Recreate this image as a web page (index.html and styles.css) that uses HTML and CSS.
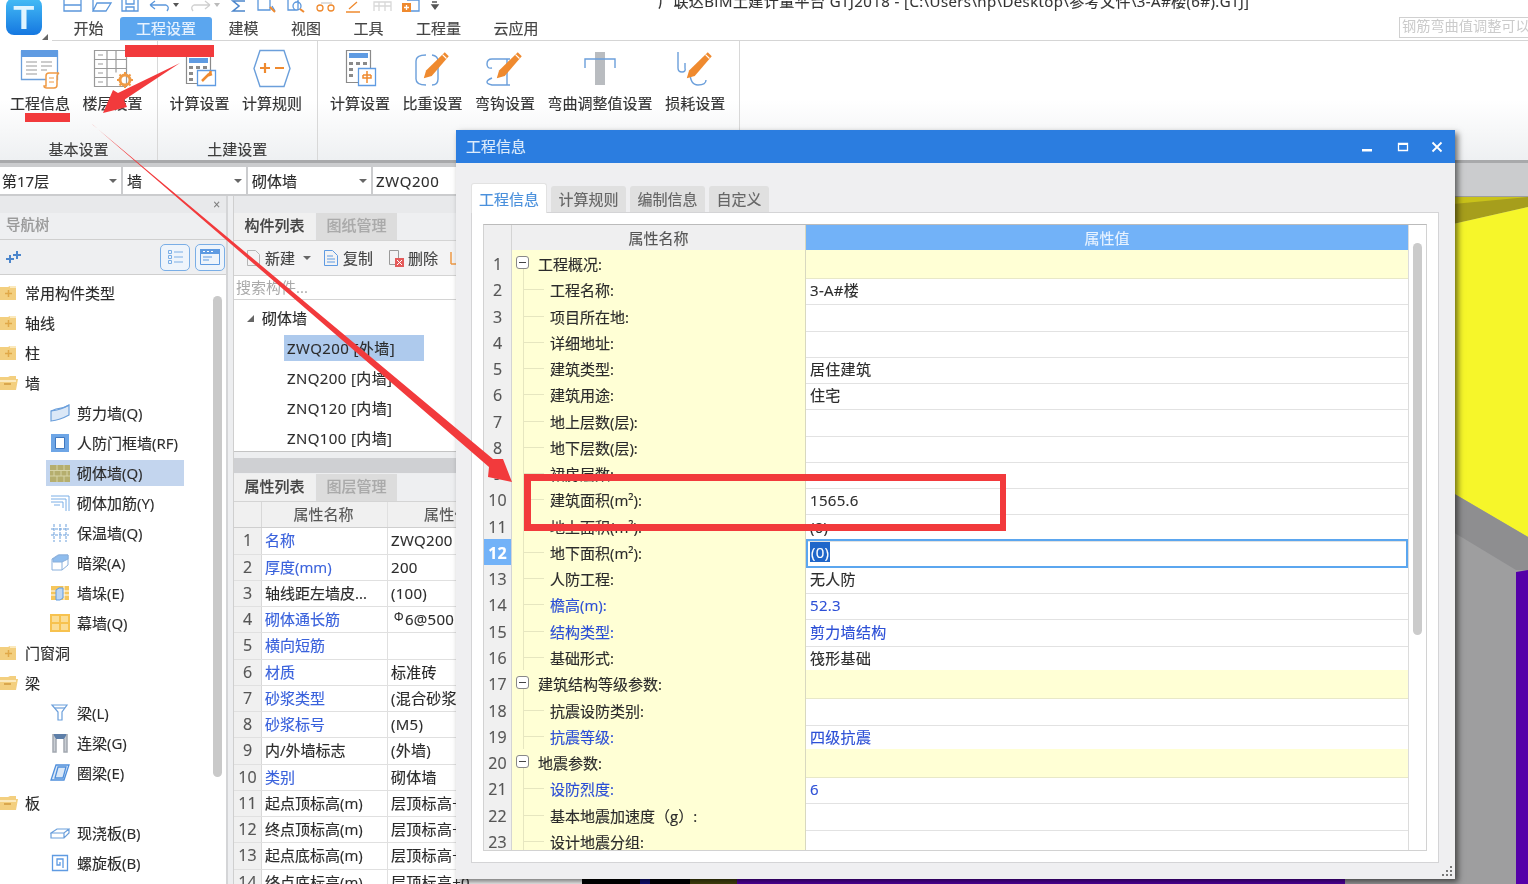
FILE: index.html
```html
<!DOCTYPE html>
<html lang="zh-CN">
<head>
<meta charset="utf-8">
<title>广联达BIM土建计量平台 GTJ2018</title>
<link rel="stylesheet" href="styles.css">
</head>
<body>
<svg class="defs" width="0" height="0">
  <symbol id="f-plus" viewBox="0 0 18 16"><path d="M-4 2h12l2-1h6v14H-4z" fill="#f3cf7f"/><path d="M10 1h6v2h-6z" fill="#fbe9bd"/><path d="M5 8.500h7M8.500 5v7" stroke="#e0a847" stroke-width="1.500"/></symbol>
  <symbol id="f-minus" viewBox="0 0 18 16"><path d="M-4 2h12l2-1h6v3h2l-2 11H-4z" fill="#f3cf7f"/><path d="M-4 5h20v2H-4z" fill="#fbe9bd"/><path d="M4 9h7" stroke="#d29a3c" stroke-width="1.500"/></symbol>
  <symbol id="pencil" viewBox="0 0 30 30"><path d="M24.500 2l3.500 3.500-15 17.500-7 2 2-7z" fill="#ef8a2f"/><path d="M22.500 4l3.500 3.500" stroke="#fff" stroke-width="1"/></symbol>
</svg>
<div class="app">
  <header class="head">
    <div class="logo-col"><div class="logo"><span class="logo-t">T</span></div><i class="logo-tri"></i></div>
    <div class="head-main">
      <div class="qat">
        <svg class="qat-icons" width="390" height="15" viewBox="0 0 390 15" fill="none" stroke-width="1.300">
          <path d="M2 0v11h17V0M2 5h17" stroke="#5b97dc"/>
          <path d="M31 11l4-8h14l-5 8zM31 11V0" stroke="#5b97dc"/>
          <path d="M60 0v11h16V0M64 0v4h8V0M64 11V7h8v4" stroke="#5b97dc"/>
          <g transform="translate(-3 0)"><path d="M91 5l5-4M91 5l5 4M91 5h16q4 2 1 6" stroke="#5b97dc"/></g>
          <path d="M111 3h6l-3 4z" fill="#555"/>
          <g transform="translate(2 0)"><path d="M146 5l-5-4M146 5l-5 4M146 5h-16q-4 2-1 6" stroke="#cfcfcf"/></g>
          <path d="M152 3h6l-3 4z" fill="#bbb"/>
          <path d="M183 1h-12l6 5-6 5h12" stroke="#4c86cc" stroke-width="1.600"/>
          <g transform="translate(-2 0)"><path d="M198 0v10h12V0M212 6l3 5" stroke="#5b97dc"/><path d="M210 7l5 5" stroke="#ef8a2f" stroke-width="2"/></g>
          <g transform="translate(-7 0)"><path d="M233 0v10h10V0M246 6a4 4 0 1 1-8 0 4 4 0 0 1 8 0" stroke="#5b97dc"/><path d="M245 9l4 3" stroke="#ef8a2f" stroke-width="2"/></g>
          <g transform="translate(-2 0)"><path d="M261 3h11" stroke="#ccc"/><circle cx="260" cy="8" r="3" stroke="#ef8a2f"/><circle cx="271" cy="8" r="3" stroke="#ef8a2f"/></g>
          <path d="M287 9l8-7M284 12h14" stroke="#ef8a2f"/>
          <path d="M312 11V2h17v9M317 2v9M323 2v9M312 6h17" stroke="#d8d8d8"/>
          <path d="M345 0h12v11h-12" stroke="#5b97dc"/><rect x="340" y="3" width="9" height="9" fill="#ef8a2f"/><path d="M342 7.500h5M344.500 5v5" stroke="#fff"/>
          <path d="M370 2h5M370 5h6l-3 4z" fill="#555" stroke="#555"/>
        </svg>
        <span class="app-title">广联达BIM土建计量平台 GTJ2018 - [C:\Users\hp\Desktop\参考文件\3-A#楼(6#).GTJ]</span>
      </div>
      <nav class="tabs">
        <span class="tab">开始</span>
        <span class="tab tab-on">工程设置</span>
        <span class="tab">建模</span>
        <span class="tab">视图</span>
        <span class="tab">工具</span>
        <span class="tab">工程量</span>
        <span class="tab">云应用</span>
        <span class="hint">钢筋弯曲值调整可以精确设置</span>
      </nav>
    </div>
  </header>

  <section class="ribbon">
    <div class="group group-first">
      <div class="items">
        <div class="item">
          <svg class="ric" viewBox="0 0 46 46" fill="none"><path d="M4.500 4.500h36v28h-36z" stroke="#6b9fdb" stroke-width="1.300"/><path d="M4 3h37v7H4z" fill="#5f9be2"/><path d="M9 15h11M9 19h11M9 23h11M9 27h11M24 15h11M24 19h11M24 23h6" stroke="#9a9a9a" stroke-width="1.200"/><path d="M30 41c-2 0-3-1-3-2h2V29q0-3 3-3h10q-2 1-2 3v9q0 3-3 3z" fill="#fff" stroke="#ef9a45" stroke-width="1.500"/><path d="M32 31h5M32 35h5" stroke="#ef9a45"/></svg>
          <span>工程信息</span>
        </div>
        <div class="item">
          <svg class="ric" viewBox="0 0 46 46" fill="none" stroke="#9a9a9a" stroke-width="1.200"><path d="M4.500 3.500h32v36h-32zM17 3.500v36M26 3.500v22M4.500 12.500h32M4.500 21.500h32M4.500 30.500H24M8 8h5M8 17h5M8 26h5M8 35h5"/><circle cx="35" cy="33" r="5" stroke="#ef9a45" stroke-width="3"/><path d="M35 25v3M35 38v3M27 33h3M40 33h3M29.500 27.500l2 2M38.500 36.500l2 2M29.500 38.500l2-2M38.500 29.500l2-2" stroke="#ef9a45" stroke-width="2"/></svg>
          <span>楼层设置</span>
        </div>
      </div>
      <div class="group-label">基本设置</div>
    </div>
    <div class="group">
      <div class="items">
        <div class="item">
          <svg class="ric" viewBox="0 0 46 46" fill="none"><path d="M9.500 8.500h24v28h-24z" stroke="#8a8a8a" stroke-width="1.200"/><path d="M12 11h19v5H12z" fill="#5f9be2"/><path d="M12 19h4v3h-4zM12 25h4v3h-4zM12 31h4v3h-4zM19 19h4v3h-4zM26 19h4v3h-4z" fill="#8a8a8a"/><path d="M20.500 23.500h18v15h-18z" fill="#fff" stroke="#5f9be2" stroke-width="1.300"/><path d="M25 34l7-7M34 24l-2 4 3-1" stroke="#ef8a2f" stroke-width="2.500"/></svg>
          <span>计算设置</span>
        </div>
        <div class="item">
          <svg class="ric" viewBox="0 0 46 46" fill="none"><path d="M11 3.500h24l6 18-6 18H11l-6-18z" stroke="#6b9fdb" stroke-width="1.400"/><path d="M11 21h10M16 16v10M26 21h9" stroke="#ef8a2f" stroke-width="2.200"/></svg>
          <span>计算规则</span>
        </div>
      </div>
      <div class="group-label">土建设置</div>
    </div>
    <div class="group group-third">
      <div class="items">
        <div class="item">
          <svg class="ric" viewBox="0 0 46 46" fill="none"><path d="M9.500 3.500h24v32h-24z" stroke="#8a8a8a" stroke-width="1.200"/><path d="M12 6h19v5H12z" fill="#5f9be2"/><path d="M12 15h4v3h-4zM12 21h4v3h-4zM12 27h4v3h-4zM19 15h4v3h-4zM26 15h4v3h-4z" fill="#8a8a8a"/><path d="M21.500 21.500h17v17h-17z" fill="#fff" stroke="#5f9be2" stroke-width="1.300"/><path d="M30 24v9M26 28h8M26 28v3h8v-3M30 33v3" stroke="#ef8a2f" stroke-width="1.500"/></svg>
          <span>计算设置</span>
        </div>
        <div class="item">
          <svg class="ric" viewBox="0 0 46 46" fill="none"><path d="M16 8Q6 8 6 14V32Q6 38 16 38M22 8Q28 9 28 14V32Q28 38 22 38" stroke="#6b9fdb" stroke-width="1.400"/><use href="#pencil" x="7" y="3" width="34" height="34"/></svg>
          <span>比重设置</span>
        </div>
        <div class="item">
          <svg class="ric" viewBox="0 0 46 46" fill="none"><path d="M28 12H10Q5 12 5 17T10 21M10 31Q5 33 5 35T10 38H28M25 12V38" stroke="#6b9fdb" stroke-width="1.400"/><use href="#pencil" x="8" y="3" width="34" height="34"/></svg>
          <span>弯钩设置</span>
        </div>
        <div class="item">
          <svg class="ric" viewBox="0 0 46 46" fill="none"><path d="M18 5h10v33H18z" fill="#b9bcc0"/><path d="M8 21v-9h30v9" stroke="#6b9fdb" stroke-width="1.400"/></svg>
          <span>弯曲调整值设置</span>
        </div>
        <div class="item">
          <svg class="ric" viewBox="0 0 46 46" fill="none"><path d="M6 5V21Q6 25 10 25T13 21V16M18 25Q18 38 26 38T34 33" stroke="#6b9fdb" stroke-width="1.400"/><use href="#pencil" x="8" y="3" width="34" height="34"/></svg>
          <span>损耗设置</span>
        </div>
      </div>
      <div class="group-label"></div>
    </div>
  </section>

  <div class="selectors">
    <div class="combo combo-a"><span>第17层</span><i class="caret"></i></div>
    <div class="combo combo-b"><span>墙</span><i class="caret"></i></div>
    <div class="combo combo-b"><span>砌体墙</span><i class="caret"></i></div>
    <div class="combo combo-c"><span>ZWQ200</span></div>
  </div>

  <main class="workspace">
    <aside class="nav">
      <div class="band"><span class="band-x">×</span></div>
      <div class="nav-head">导航树</div>
      <div class="nav-tools">
        <svg class="spark" width="18" height="14" viewBox="0 0 18 14" fill="#4c86cc"><path d="M5 5h2v3h3v2H7v3H5v-3H2V8h3zM12 1h2v3h3v2h-3v3h-2V6H9V4h3z"/></svg>
        <button class="nav-btn"><svg width="18" height="18" viewBox="0 0 18 18" fill="none" stroke="#7aaee6"><path d="M2.500 2.500h3v3h-3zM2.500 7.500h3v3h-3zM2.500 12.500h3v3h-3zM8 4h9M8 9h9M8 14h9"/></svg></button>
        <button class="nav-btn"><svg width="22" height="18" viewBox="0 0 22 18" fill="none"><path d="M1.500 1.500h19v15h-19z" stroke="#5f9be2"/><path d="M1 1h20v5H1z" fill="#5f9be2"/><path d="M4 3.500h2M8 3.500h2M12 3.500h2" stroke="#fff"/><path d="M4 9h9M4 12h6" stroke="#5f9be2"/></svg></button>
      </div>
      <div class="nav-body">
        <div class="tree">
          <div class="top"><svg class="folder"><use href="#f-plus"/></svg>常用构件类型</div>
          <div class="top"><svg class="folder"><use href="#f-plus"/></svg>轴线</div>
          <div class="top"><svg class="folder"><use href="#f-plus"/></svg>柱</div>
          <div class="top"><svg class="folder"><use href="#f-minus"/></svg>墙</div>
          <div class="node"><div class="node-box"><svg class="nic" viewBox="0 0 20 20" fill="none" stroke="#6b9fdb" stroke-width="1.200"><path d="M1 8q10-1 18-6v10Q10 17 1 18z" fill="#dbe8f7"/><path d="M1 8l5-2q8-1 13-4"/></svg>剪力墙(Q)</div></div>
          <div class="node"><div class="node-box"><svg class="nic" viewBox="0 0 20 20"><path d="M1 1h18v18H1z" fill="#6ea6e6"/><path d="M5.500 4.500h9v11h-9z" fill="#fff" stroke="#3f78c0"/></svg>人防门框墙(RF)</div></div>
          <div class="node"><div class="node-box node-on"><svg class="nic" viewBox="0 0 20 20"><path d="M0 2h20v17H0z" fill="#b5ae6e"/><path d="M0 7.500h20M0 13h20M7 2v5.500M14 2v5.500M4 7.500V13M11 7.500V13M17 7.500V13M7 13v6M14 13v6" stroke="#d6d3a6"/></svg>砌体墙(Q)</div></div>
          <div class="node"><div class="node-box"><svg class="nic" viewBox="0 0 20 20" fill="none" stroke="#7aaee6"><path d="M1 3h18v15M1 6h15v12M1 9h12v6M4 12h6"/></svg>砌体加筋(Y)</div></div>
          <div class="node"><div class="node-box"><svg class="nic" viewBox="0 0 20 20" fill="none" stroke="#6b9fdb"><path d="M4 1v18M10 1v18M16 1v18M1 6h18M1 12h18" stroke-dasharray="3 1"/></svg>保温墙(Q)</div></div>
          <div class="node"><div class="node-box"><svg class="nic" viewBox="0 0 20 20" fill="none" stroke="#8ab0dc"><path d="M2 6l6-4h10v10l-6 5H2z" fill="#fff"/><path d="M2 6h10v11M12 6l6-4"/><path d="M3 6l6-4h9v4l-6 3H3z" fill="#8fbdee"/></svg>暗梁(A)</div></div>
          <div class="node"><div class="node-box"><svg class="nic" viewBox="0 0 20 20"><path d="M1 3h18v14H1z" fill="#f5c65c"/><path d="M1 8h18M1 12h18M14 3v14" stroke="#fff"/><path d="M6 7l3-2h4v10l-3 2H6z" fill="#bcd6f3" stroke="#5f9be2"/></svg>墙垛(E)</div></div>
          <div class="node"><div class="node-box"><svg class="nic" viewBox="0 0 20 20"><path d="M0 1h20v18H0z" fill="#f7c24f"/><path d="M2 3h7v6H2zM11 3h7v6h-7zM2 11h7v6H2zM11 11h7v6h-7z" fill="#fbdd95"/></svg>幕墙(Q)</div></div>
          <div class="top"><svg class="folder"><use href="#f-plus"/></svg>门窗洞</div>
          <div class="top"><svg class="folder"><use href="#f-minus"/></svg>梁</div>
          <div class="node"><div class="node-box"><svg class="nic" viewBox="0 0 20 20" fill="none" stroke="#6b9fdb" stroke-width="1.200"><path d="M2 2h15l-5 7v8H8V9z"/><path d="M5 5h10"/></svg>梁(L)</div></div>
          <div class="node"><div class="node-box"><svg class="nic" viewBox="0 0 20 20" fill="none"><path d="M3 1h14v5H3z" fill="#5d7ea8"/><path d="M3 1v18h3V6M17 1v18h-3V6" stroke="#a2a8b0" stroke-width="1.500" fill="#c9ced4"/></svg>连梁(G)</div></div>
          <div class="node"><div class="node-box"><svg class="nic" viewBox="0 0 20 20" fill="none" stroke="#4f8fdc" stroke-width="1.300"><path d="M6 2h13l-5 15H1zM8 4h8l-3 11H5z" fill="#dbe8f7"/></svg>圈梁(E)</div></div>
          <div class="top"><svg class="folder"><use href="#f-minus"/></svg>板</div>
          <div class="node"><div class="node-box"><svg class="nic" viewBox="0 0 20 20" fill="none" stroke="#6b9fdb" stroke-width="1.200"><path d="M1 10l6-4h12l-5 4zM1 10v5h13l5-5V6M14 10v5"/></svg>现浇板(B)</div></div>
          <div class="node"><div class="node-box"><svg class="nic" viewBox="0 0 20 20" fill="none" stroke="#5f9be2" stroke-width="1.300"><path d="M2.500 2.500h15v15h-15zM13 15V6H7v6h3V9"/></svg>螺旋板(B)</div></div>
          <div class="node"><div class="node-box"><svg class="nic" viewBox="0 0 20 20"><path d="M1 1h18v18H1z" fill="#8fb7e6"/></svg>柱帽(V)</div></div>
        </div>
        <div class="nav-scroll"><i class="nav-thumb"></i></div>
      </div>
    </aside>

    <div class="gutter"></div>

    <section class="comp">
      <div class="band"></div>
      <div class="ptabs"><span class="ptab ptab-on">构件列表</span><span class="ptab">图纸管理</span></div>
      <div class="comp-tools">
        <svg width="18" height="20" viewBox="0 0 18 20" fill="none" stroke="#b5b5b5"><path d="M3.500 2.500h8l4 4v11h-12z"/></svg><span>新建</span><i class="caret caret-tool"></i>
        <svg class="t-gap" width="18" height="20" viewBox="0 0 18 20" fill="none" stroke="#5f9be2"><path d="M2.500 2.500h8l5 5v10h-13zM5 8h6M5 11h8M5 14h8"/></svg><span>复制</span>
        <svg class="t-gap t-gap-wide" width="18" height="20" viewBox="0 0 18 20" fill="none" stroke="#9a9a9a"><path d="M2.500 2.500h9v14h-9z"/><rect x="8" y="10" width="9" height="9" fill="#e45a5a" stroke="none"/><path d="M10 12l5 5M15 12l-5 5" stroke="#fff"/></svg><span>删除</span>
        <svg class="t-gap" width="10" height="20" viewBox="0 0 10 20" fill="none" stroke="#ef9a45"><path d="M2 16V4M2 16h8" stroke-width="1.500"/></svg>
      </div>
      <div class="comp-search">搜索构件...</div>
      <div class="comp-tree">
        <div class="comp-root"><i class="tri"></i>砌体墙</div>
        <div class="comp-leaf comp-leaf-on">ZWQ200 [外墙]</div>
        <div class="comp-leaf">ZNQ200 [内墙]</div>
        <div class="comp-leaf">ZNQ120 [内墙]</div>
        <div class="comp-leaf">ZNQ100 [内墙]</div>
      </div>
      <div class="comp-split"><i></i></div>
      <div class="ptabs"><span class="ptab ptab-on">属性列表</span><span class="ptab">图层管理</span></div>
      <div class="ptable">
        <div class="prow phead"><span class="pno"></span><span class="pnm pc">属性名称</span><span class="pval pvh">属性值</span></div>
        <div class="prow"><span class="pno">1</span><span class="pnm lnk">名称</span><span class="pval">ZWQ200</span></div>
        <div class="prow"><span class="pno">2</span><span class="pnm lnk">厚度(mm)</span><span class="pval">200</span></div>
        <div class="prow"><span class="pno">3</span><span class="pnm">轴线距左墙皮...</span><span class="pval">(100)</span></div>
        <div class="prow"><span class="pno">4</span><span class="pnm lnk">砌体通长筋</span><span class="pval"><sup class="bar">Φ</sup>6@500</span></div>
        <div class="prow"><span class="pno">5</span><span class="pnm lnk">横向短筋</span><span class="pval"></span></div>
        <div class="prow"><span class="pno">6</span><span class="pnm lnk">材质</span><span class="pval">标准砖</span></div>
        <div class="prow"><span class="pno">7</span><span class="pnm lnk">砂浆类型</span><span class="pval">(混合砂浆)</span></div>
        <div class="prow"><span class="pno">8</span><span class="pnm lnk">砂浆标号</span><span class="pval">(M5)</span></div>
        <div class="prow"><span class="pno">9</span><span class="pnm">内/外墙标志</span><span class="pval">(外墙)</span></div>
        <div class="prow"><span class="pno">10</span><span class="pnm lnk">类别</span><span class="pval">砌体墙</span></div>
        <div class="prow"><span class="pno">11</span><span class="pnm">起点顶标高(m)</span><span class="pval">层顶标高+0</span></div>
        <div class="prow"><span class="pno">12</span><span class="pnm">终点顶标高(m)</span><span class="pval">层顶标高+0</span></div>
        <div class="prow"><span class="pno">13</span><span class="pnm">起点底标高(m)</span><span class="pval">层顶标高+0</span></div>
        <div class="prow"><span class="pno">14</span><span class="pnm">终点底标高(m)</span><span class="pval">层顶标高+0</span></div>
      </div>
    </section>

    <section class="canvas">
      <svg class="scene" width="946" height="688" viewBox="582 196 946 688" preserveAspectRatio="none">
        <rect x="582" y="196" width="946" height="688" fill="#9e9e9f"/>
        <path d="M1400 200L1528 197V207L1400 236z" fill="#a69e1c"/>
        <path d="M1400 209L1528 197H1400z" fill="#c9c21a"/>
        <path d="M1400 236L1528 207V537L1400 462z" fill="#f6f62a"/>
        <path d="M1400 462L1528 537V570H1516L1400 500z" fill="#8e8e90"/>
        <path d="M1516 572L1528 570V884H1516z" fill="#5500a8"/>
        <path d="M582 870H640V884H582zM650 870H690V884H650z" fill="#000"/>
        <path d="M640 870H650V884H640z" fill="#10107a"/>
        <path d="M690 870H737V884H690z" fill="#47460e"/>
        <path d="M737 870H1345V884H737z" fill="#5500a8"/>
      </svg>
    </section>
  </main>

  <section class="dialog">
    <div class="dlg-title">
      <span>工程信息</span>
      <div class="dlg-btns">
        <svg width="12" height="12" viewBox="0 0 12 12" fill="#fff"><path d="M1 8h10v2.500H1z"/></svg>
        <svg width="12" height="12" viewBox="0 0 12 12" fill="none" stroke="#fff" stroke-width="1.300"><path d="M1.500 2.500h9v7h-9z"/><path d="M1 3h10" stroke-width="2"/></svg>
        <svg class="dlg-close" width="12" height="12" viewBox="0 0 12 12" fill="none" stroke="#fff" stroke-width="1.800"><path d="M1.500 1.500l9 9M10.500 1.500l-9 9"/></svg>
      </div>
    </div>
    <div class="dlg-body">
      <div class="dtabs">
        <span class="dtab dtab-on">工程信息</span>
        <span class="dtab">计算规则</span>
        <span class="dtab">编制信息</span>
        <span class="dtab dtab-s">自定义</span>
      </div>
      <div class="dpanel">
        <div class="dtable">
          <div class="dgrid">
            <div class="drow dhead"><span class="no"></span><span class="nm">属性名称</span><span class="val">属性值</span></div>
            <div class="drow sec"><span class="no">1</span><span class="nm"><i class="minus"></i>工程概况:</span><span class="val"></span></div>
            <div class="drow"><span class="no">2</span><span class="nm">工程名称:</span><span class="val">3-A#楼</span></div>
            <div class="drow"><span class="no">3</span><span class="nm">项目所在地:</span><span class="val"></span></div>
            <div class="drow"><span class="no">4</span><span class="nm">详细地址:</span><span class="val"></span></div>
            <div class="drow"><span class="no">5</span><span class="nm">建筑类型:</span><span class="val">居住建筑</span></div>
            <div class="drow"><span class="no">6</span><span class="nm">建筑用途:</span><span class="val">住宅</span></div>
            <div class="drow"><span class="no">7</span><span class="nm">地上层数(层):</span><span class="val"></span></div>
            <div class="drow"><span class="no">8</span><span class="nm">地下层数(层):</span><span class="val"></span></div>
            <div class="drow"><span class="no">9</span><span class="nm">裙房层数:</span><span class="val"></span></div>
            <div class="drow"><span class="no">10</span><span class="nm">建筑面积(m²):</span><span class="val">1565.6</span></div>
            <div class="drow"><span class="no">11</span><span class="nm">地上面积(m²):</span><span class="val">(0)</span></div>
            <div class="drow row-sel"><span class="no">12</span><span class="nm">地下面积(m²):</span><span class="val"><b class="sel">(0)</b></span></div>
            <div class="drow"><span class="no">13</span><span class="nm">人防工程:</span><span class="val">无人防</span></div>
            <div class="drow blue"><span class="no">14</span><span class="nm">檐高(m):</span><span class="val">52.3</span></div>
            <div class="drow blue"><span class="no">15</span><span class="nm">结构类型:</span><span class="val">剪力墙结构</span></div>
            <div class="drow"><span class="no">16</span><span class="nm">基础形式:</span><span class="val">筏形基础</span></div>
            <div class="drow sec"><span class="no">17</span><span class="nm"><i class="minus"></i>建筑结构等级参数:</span><span class="val"></span></div>
            <div class="drow"><span class="no">18</span><span class="nm">抗震设防类别:</span><span class="val"></span></div>
            <div class="drow blue"><span class="no">19</span><span class="nm">抗震等级:</span><span class="val">四级抗震</span></div>
            <div class="drow sec"><span class="no">20</span><span class="nm"><i class="minus"></i>地震参数:</span><span class="val"></span></div>
            <div class="drow blue"><span class="no">21</span><span class="nm">设防烈度:</span><span class="val">6</span></div>
            <div class="drow"><span class="no">22</span><span class="nm">基本地震加速度（g）:</span><span class="val"></span></div>
            <div class="drow"><span class="no">23</span><span class="nm">设计地震分组:</span><span class="val"></span></div>
          </div>
          <div class="dscroll"><i class="dthumb"></i></div>
        </div>
      </div>
      <svg class="grip" width="12" height="12" viewBox="0 0 12 12" fill="#777"><path d="M9 1h2v2H9zM5 5h2v2H5zM9 5h2v2H9zM1 9h2v2H1zM5 9h2v2H5zM9 9h2v2H9z"/></svg>
    </div>
  </section>

  <svg class="annot" width="1528" height="884" viewBox="0 0 1528 884">
    <g fill="#f23a3c">
      <path d="M125 45h89v12h-89zM25 113h45v9H25z"/>
      <path d="M180 63L124 100 127 107 103 113 113 90 118 93z"/>
      <path d="M92 124L93 125 493 459 503 459 512 482 488 477 489 467z"/>
      <path d="M524 474h482v57H524zM531 481v43h469v-43z" fill-rule="evenodd"/>
    </g>
  </svg>
</div>
</body>
</html>
```
FILE: styles.css
```css
* { box-sizing: border-box; }
html, body { margin: 0; padding: 0; background: #fff; }
body { font: 15px/20px "Open Sans", "Noto Sans CJK SC", sans-serif; color: #2b2b2b; -webkit-text-stroke: .15px; }
.defs { position: absolute; }
.app { position: relative; width: 1528px; height: 884px; overflow: hidden; display: flex; flex-direction: column; background: #fff; filter: blur(.45px); }

/* header */
.head { display: flex; height: 41px; flex: none; }
.logo-col { position: relative; width: 52px; flex: none; }
.logo { width: 36px; height: 37px; margin: -2px 0 0 6px; border-radius: 8px; background: linear-gradient(#45bdf6, #1577e0); display: flex; justify-content: center; align-items: center; }
.logo-t { color: #dff4ff; font: 700 34px/36px "Liberation Sans", sans-serif; }
.logo-tri { position: absolute; right: 4px; top: 34px; border: 3px solid transparent; border-right-color: #666; border-bottom-color: #666; }
.head-main { flex: 1; display: flex; flex-direction: column; min-width: 0; }
.qat { height: 15px; display: flex; overflow: hidden; padding-left: 10px; white-space: nowrap; }
.qat-icons { flex: none; }
.app-title { margin: -9px 0 0 206px; color: #333; font-size: 15px; line-height: 20px; letter-spacing: .42px; }
.tabs { height: 26px; display: flex; align-items: flex-end; gap: .5px; padding-left: 5.500px; border-bottom: 1px solid #d5d5d5; }
.tab { height: 23px; line-height: 22px; padding: 0 16px; color: #444; white-space: nowrap; }
.tab-on { background: #5ba6ef; color: #e8f3ff; border-radius: 3px 3px 0 0; }
.hint { margin: 0 0 2px auto; width: 129px; height: 21px; border: 1px solid #d0d0d0; border-right: 0; color: #cbcbcb; font-size: 14.200px; line-height: 15px; padding-left: 2px; overflow: hidden; white-space: nowrap; -webkit-text-stroke: 0; }

/* ribbon */
.ribbon { height: 122px; flex: none; display: flex; background: linear-gradient(#fff 50%, #eef0f2); border-bottom: 3px solid #a8a9ab; }
.group { display: flex; flex-direction: column; border-right: 1px solid #d8d8d8; }
.group-first .items { padding-left: 10px; }
.group-third .items { padding-left: 12.500px; padding-right: 13.500px; }
.items { flex: 1; display: flex; gap: 12.500px; padding: 6px 14.500px 0 11.500px; }
.item { display: flex; flex-direction: column; align-items: center; white-space: nowrap; color: #333; }
.ric { width: 46px; height: 46px; flex: none; }
.group-label { height: 22px; line-height: 22px; text-align: center; color: #3c3c3c; }

/* selectors */
.selectors { height: 33px; flex: none; display: flex; gap: 2px; padding-top: 4px; padding-bottom: 2px; background: #cbccce; }
.combo { background: #fff; display: flex; align-items: center; justify-content: space-between; padding: 0 4px 0 2px; height: 27px; }
.combo-a { width: 121px; }
.combo-b { width: 123px; padding-left: 4px; }
.combo-c { width: 90px; letter-spacing: .6px; padding-left: 3px; }
.caret { width: 0; height: 0; border: 4px solid transparent; border-top: 4px solid #666; border-bottom: 0; flex: none; }

/* workspace */
.workspace { flex: 1; min-height: 0; display: flex; }
.band { height: 17px; flex: none; background: #e8e9eb; position: relative; }
.band-x { position: absolute; right: 6px; top: -1px; color: #777; font-size: 12px; }
.nav { width: 228px; flex: none; display: flex; flex-direction: column; border-right: 2px solid #d4d5d7; }
.nav-head { height: 27px; line-height: 24px; padding-left: 6px; color: #9b9b9b; font-weight: 500; font-size: 14.500px; background: #eeeff1; border-bottom: 1px solid #cfcfcf; flex: none; }
.nav-tools { height: 35px; display: flex; align-items: center; gap: 5px; padding: 0 1px 0 4px; background: #eeeff1; border-bottom: 1px solid #cfcfcf; flex: none; }
.spark { margin-right: auto; }
.nav-btn { width: 30px; height: 27px; padding: 0; border: 1px solid #7aaee6; border-radius: 5px; background: #eef4fb; display: flex; align-items: center; justify-content: center; }
.nav-body { flex: 1; min-height: 0; display: flex; overflow: hidden; }
.tree { flex: 1; padding-top: 3px; }
.top { height: 30px; display: flex; align-items: center; gap: 7px; white-space: nowrap; }
.folder { width: 18px; height: 16px; flex: none; }
.node { height: 30px; display: flex; align-items: center; padding-left: 46px; }
.node-box { width: 138px; height: 26px; padding-left: 4px; display: flex; align-items: center; gap: 7px; white-space: nowrap; }
.node-on { background: #c3d5ee; }
.nic { width: 20px; height: 20px; flex: none; }
.nav-scroll { width: 13px; flex: none; padding-top: 21px; }
.nav-thumb { display: block; width: 9px; height: 481px; border-radius: 5px; background: #c9c9c9; }
.gutter { width: 5px; flex: none; background: #edeef0; }

/* component panel */
.comp { width: 349px; flex: none; display: flex; flex-direction: column; background: #fff; border-left: 1px solid #cfcfcf; }
.ptabs { height: 28px; flex: none; display: flex; background: #eeeff1; border-bottom: 1px solid #d4d4d4; }
.ptab { width: 81px; margin-right: 1px; line-height: 25px; text-align: center; font-weight: 500; color: #aaa; background: #dcdcdc; }
.ptab-on { color: #444; background: #f0f0f0; }
.comp-tools { height: 35px; flex: none; display: flex; align-items: center; padding-left: 10px; gap: 3px; background: #f3f3f4; border-bottom: 1px solid #d4d4d4; color: #444; overflow: hidden; }
.caret-tool { margin-left: 5px; }
.t-gap { margin-left: 8px; }
.t-gap-wide { margin-left: 11px; }
.comp-search { height: 24px; flex: none; line-height: 23px; padding-left: 2px; color: #aaa; border-bottom: 1px solid #d4d4d4; -webkit-text-stroke: 0; }
.comp-tree { height: 152px; flex: none; border-bottom: 1px solid #c4c4c4; padding-top: 3px; }
.comp-root { height: 30px; margin-bottom: 2px; display: flex; align-items: center; padding-left: 13px; gap: 8px; }
.tri { width: 0; height: 0; border-style: solid; border-width: 0 0 7px 7px; border-color: transparent transparent #666 transparent; }
.comp-leaf { height: 26px; line-height: 26px; width: 140px; margin: 0 0 4px 50px; padding-left: 3px; white-space: nowrap; letter-spacing: .4px; }
.comp-leaf-on { background: #aecaed; }
.comp-split { height: 22px; flex: none; padding-top: 6px; background: #edeef0; }
.comp-split i { display: block; height: 15px; background: #cfd0d3; }
.ptable { flex: 1; overflow: hidden; }
.prow { display: grid; grid-template-columns: 28px 126px 195px; height: 26.270px; line-height: 25px; border-bottom: 1px solid #e0e0e0; white-space: nowrap; }
.phead { background: #f0f0f0; border-bottom-color: #cfcfcf; color: #555; }
.pno { background: #f0f0f0; border-right: 1px solid #d8d8d8; text-align: center; color: #555; font-size: 16px; }
.pnm { padding-left: 3px; border-right: 1px solid #e0e0e0; overflow: hidden; }
.pc { padding-left: 0; padding-right: 2px; text-align: center; }
.pval { padding-left: 3px; overflow: hidden; letter-spacing: .3px; }
.pvh { padding-left: 36px; }
.bar { font-size: 12px; line-height: 0; vertical-align: 4px; margin: 0 1px 0 3px; }
.lnk { color: #3a62dc; }

/* canvas */
.canvas { flex: 1; min-width: 0; background: #9e9e9f; }
.scene { display: block; }

/* dialog */
.dialog { position: absolute; left: 456px; top: 130px; width: 999px; height: 749px; display: flex; flex-direction: column; background: #efeff1; box-shadow: 3px 3px 6px rgba(0, 0, 0, .55); }
.dlg-title { height: 33px; flex: none; display: flex; align-items: center; justify-content: space-between; background: #2b7de0; color: #dcebfb; padding: 0 12px 2px 10px; font-size: 15px; }
.dlg-btns { display: flex; gap: 24px; align-items: center; margin-top: 2px; }
.dlg-close { margin-left: -2px; }
.dlg-body { flex: 1; min-height: 0; position: relative; padding: 20px 16px 0 15px; display: flex; flex-direction: column; }
.dtabs { height: 30px; flex: none; display: flex; align-items: flex-end; gap: 4px; position: relative; z-index: 1; margin-bottom: -1px; }
.dtab { width: 75px; height: 26px; line-height: 26px; text-align: center; color: #666; background: #e0e0e0; border-radius: 3px 3px 0 0; margin-bottom: 1px; }
.dtab-s { width: 60px; }
.dtab-on { width: 76px; height: 30px; line-height: 30px; background: #fff; color: #4a90dc; margin-bottom: 0; border: 1px solid #e2e2e2; border-bottom: 0; }
.dpanel { height: 651px; flex: none; background: #fff; border: 1px solid #d4d4d6; padding: 11px; }
.dtable { height: 627px; display: flex; border: 1px solid #d2d2d2; border-top-color: #bbb; overflow: hidden; }
.dgrid { width: 924px; flex: none; overflow: hidden; }
.drow { display: grid; grid-template-columns: 28px 294px 602px; height: 26.270px; white-space: nowrap; }
.no { background: #f0f0f0; border-right: 1px solid #d4d4d4; border-bottom: 1px solid #dcdcdc; text-align: center; color: #555; line-height: 28px; font-size: 16px; }
.nm { position: relative; background: #ffffd5; padding-left: 38px; line-height: 28px; border-bottom: 1px solid #e8e8c8; border-right: 1px solid #d8d8c0; color: #2b2b2b; }
.nm::before { content: ""; position: absolute; left: 11px; top: -1px; bottom: -1px; border-left: 1px solid #e6e6c0; }
.nm::after { content: ""; position: absolute; left: 11px; top: 13px; width: 21px; border-top: 1px solid #e6e6c0; }
.val { padding-left: 4px; line-height: 28px; border-bottom: 1px solid #e2e2e2; color: #2b2b2b; letter-spacing: .3px; }
.dhead { height: 25px; }
.dhead .no { background: #efeff0; border-bottom: 1px solid #c4c4c4; }
.dhead .nm { background: #efeff0; padding: 0; text-align: center; color: #555; line-height: 26px; border-bottom: 1px solid #c4c4c4; }
.dhead .nm::before, .dhead .nm::after { display: none; }
.dhead .val { background: #72b2f8; color: #e8f3ff; text-align: center; padding: 0; line-height: 26px; border-bottom: 1px solid #9ab8dc; letter-spacing: 0; }
.sec .nm { padding-left: 26px; }
.sec .nm::after { display: none; }
.sec .nm::before { top: 19px; }
.sec .val { background: #ffffd5; border-bottom-color: #e8e8c8; }
.minus { position: absolute; left: 4px; top: 6px; width: 13px; height: 13px; border: 1px solid #888; border-radius: 3px; background: #fff; z-index: 1; }
.minus::after { content: ""; position: absolute; left: 2px; right: 2px; top: 5px; border-top: 1px solid #444; }
.blue .nm, .blue .val { color: #2c4fd6; }
.row-sel .no { background: #72b2f8; color: #fff; font-weight: 700; }
.row-sel .val { border: 2px solid #5ba6ef; padding-left: 2px; line-height: 22px; }
.sel { font-weight: 400; background: #1f66c9; color: #fff; display: inline-block; height: 20px; line-height: 20px; padding: 0 1px; }
.dscroll { flex: 1; border-left: 1px solid #dcdcdc; padding: 18px 0 0 4px; }
.dthumb { display: block; width: 9px; height: 392px; border-radius: 5px; background: #cbcbcb; }
.grip { position: absolute; right: 2px; bottom: 2px; }

/* annotations */
.annot { position: absolute; left: 0; top: 0; pointer-events: none; }
```
